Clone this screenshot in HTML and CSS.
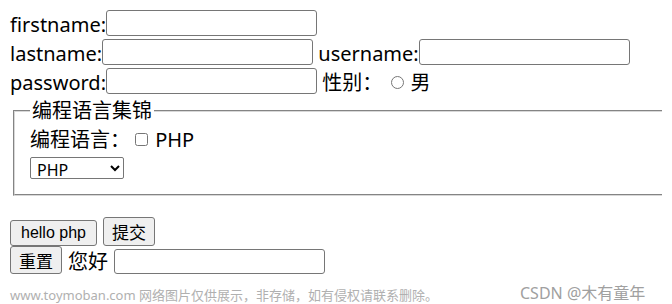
FILE: index.html
```html
<!DOCTYPE html>
<html lang="zh-CN">
<head>
    <meta charset="UTF-8">
    <meta name="viewport" content="width=device-width, initial-scale=1.0">
    <title>表单</title>
    <link rel="stylesheet" href="styles.css">
</head>
<body>
    <form class="form">
        <div class="row">firstname:<input type="text" class="field"></div>
        <div class="row">lastname:<input type="text" class="field"> username:<input type="text" class="field"></div>
        <div class="row">password:<input type="password" class="field"> 性别： <input type="radio" class="radio" name="sex">男</div>
        <div class="frame">
            <fieldset class="group">
                <legend>编程语言集锦</legend>
                <div class="lang">编程语言： <input type="checkbox" class="check">PHP</div>
                <select class="pick">
                    <option>PHP</option>
                    <option>Java</option>
                    <option>Python</option>
                </select>
            </fieldset>
        </div>
        <div class="actions first">
            <button type="button" class="btn btn-en">hello php</button>
            <button type="submit" class="btn">提交</button>
        </div>
        <div class="actions second">
            <button type="reset" class="btn">重置</button>
            <span class="hello">您好</span>
            <input type="text" class="field">
        </div>
    </form>
    <div class="mark">www.toymoban.com 网络图片仅供展示，非存储，如有侵权请联系删除。</div>
    <div class="sign">CSDN @木有童年</div>
</body>
</html>
```

FILE: styles.css
```css
html {
    overflow: hidden;
}
body {
    margin: 10px;
    font-family: "Noto Sans", "Noto Sans CJK SC", sans-serif;
    font-size: 20px;
    color: #000;
    background: #fff;
}
.row {
    height: 29px;
    line-height: 29px;
    white-space: nowrap;
}
.field {
    width: 211px;
    height: 26px;
    box-sizing: border-box;
    border: 1px solid #767676;
    border-radius: 3px;
    margin: 0;
    padding: 1px 3px;
    font-size: 16px;
    vertical-align: top;
}
.radio {
    width: 13px;
    height: 13px;
    margin: 0 6px 0 4px;
    vertical-align: 1px;
}
.frame {
    margin-right: -10px;
}
.group {
    margin: 2px 0 0 3px;
    padding: 0 15px 12px 15px;
    border: 2px groove #d8d8d8;
    border-right: 0;
}
.group legend {
    padding: 0 2px;
    line-height: 24px;
}
.lang {
    height: 30px;
    line-height: 30px;
    margin-top: 2px;
}
.check {
    width: 13px;
    height: 13px;
    margin: 0 7px 0 0;
    vertical-align: 1px;
}
.pick {
    width: 94px;
    height: 22px;
    font-family: "Noto Sans", sans-serif;
    font-size: 16px;
    border: 1px solid #767676;
    border-radius: 2px;
    background: #fff;
    padding: 0 2px;
}
.actions {
    display: flex;
    align-items: flex-end;
    gap: 6px;
}
.first {
    margin-top: 21px;
}
.btn {
    height: 29px;
    padding: 0 8px;
    font-family: "Noto Sans", "Noto Sans CJK SC", sans-serif;
    font-size: 17px;
    background: #efefef;
    border: 1px solid #767676;
    border-radius: 3px;
    color: #000;
}
.btn-en {
    height: 26px;
    padding: 0 10px;
    font-family: "Liberation Sans", Arial, sans-serif;
    font-size: 16px;
}
.second {
    align-items: center;
    height: 28px;
}
.second .btn {
    height: 28px;
}
.second .field {
    margin: 3px 0 0;
    height: 25px;
}
.mark {
    position: absolute;
    left: 10px;
    top: 288px;
    line-height: 14px;
    font-size: 13px;
    color: #b0b0b0;
    white-space: nowrap;
}
.sign {
    position: absolute;
    left: 520px;
    top: 280px;
    font-size: 16px;
    color: #a0a0a0;
    white-space: nowrap;
}
```
